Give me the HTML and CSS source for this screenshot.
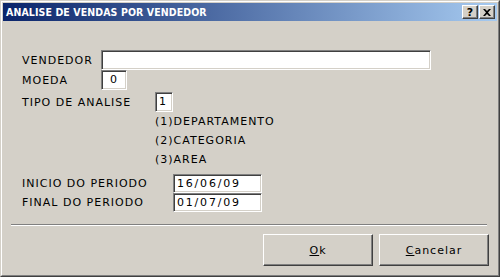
FILE: index.html
```html
<!DOCTYPE html>
<html lang="pt">
<head>
<meta charset="UTF-8">
<title>Analise de Vendas por Vendedor</title>
<link rel="stylesheet" href="styles.css">
</head>
<body>
<div class="window">
  <div class="frame">
    <div class="titlebar">
      <span class="title">ANALISE DE VENDAS POR VENDEDOR</span>
      <div class="caption-buttons">
        <button class="cap-btn help">?</button>
        <button class="cap-btn close">
          <svg width="8" height="7" viewBox="0 0 8 7">
            <path d="M0 0 L2 0 L4 2 L6 0 L8 0 L5 3.5 L8 7 L6 7 L4 5 L2 7 L0 7 L3 3.5 Z" fill="#000"/>
          </svg>
        </button>
      </div>
    </div>

    <div class="content">
      <div class="form">
        <div class="row">
          <span class="label w-short">VENDEDOR</span>
          <div class="field vendedor"></div>
        </div>
        <div class="row">
          <span class="label w-short">MOEDA</span>
          <div class="field moeda">0</div>
        </div>
        <div class="row tipo">
          <span class="label w-mid">TIPO DE ANALISE</span>
          <div class="field tipo-field">1</div>
        </div>
        <div class="options">
          <div>(1)DEPARTAMENTO</div>
          <div>(2)CATEGORIA</div>
          <div>(3)AREA</div>
        </div>
        <div class="dates">
          <div class="row date-row">
            <span class="label w-long">INICIO DO PERIODO</span>
            <div class="field date">16/06/09</div>
          </div>
          <div class="row date-row">
            <span class="label w-long">FINAL DO PERIODO</span>
            <div class="field date">01/07/09</div>
          </div>
        </div>
      </div>

      <div class="separator"></div>

      <div class="actions">
        <button class="btn"><u>O</u>k</button>
        <button class="btn"><u>C</u>ancelar</button>
      </div>
    </div>
  </div>
</div>
</body>
</html>
```

FILE: styles.css
```css
body {
  margin: 0;
  background-color: #d4d0c8;
  font-family: 'DejaVu Sans', Verdana, sans-serif;
  font-size: 11px;
  color: #000;
}

/* outer window border, classic raised look */
.window {
  width: 500px;
  height: 277px;
  box-sizing: border-box;
  border: 1px solid;
  border-color: #d4d0c8 #404040 #404040 #d4d0c8;
  background-color: #d4d0c8;
}

.frame {
  height: 100%;
  box-sizing: border-box;
  border: 1px solid;
  border-color: #fff #808080 #808080 #fff;
  padding: 1px;
}

.titlebar {
  height: 18px;
  display: flex;
  align-items: center;
  justify-content: space-between;
  padding: 0 2px 0 3px;
  background: linear-gradient(to right, #0a246a, #a6caf0);
}

.title {
  color: #fff;
  font-family: 'DejaVu Sans Condensed', 'DejaVu Sans', sans-serif;
  font-weight: bold;
  font-size: 10.5px;
  letter-spacing: 0.1px;
}

.caption-buttons {
  display: flex;
  gap: 1px;
}

.cap-btn {
  width: 16px;
  height: 14px;
  padding: 0;
  display: flex;
  align-items: center;
  justify-content: center;
  background-color: #d4d0c8;
  border: 1px solid;
  border-color: #fff #404040 #404040 #fff;
  box-shadow: inset -1px -1px #808080;
  font-family: 'DejaVu Sans', sans-serif;
  font-weight: bold;
  font-size: 11px;
  line-height: 1;
  color: #000;
}

.content {
  padding-top: 29px;
}

.form {
  padding-left: 19px;
  letter-spacing: 1px;
}

.row {
  display: flex;
  align-items: center;
  height: 20px;
}

.row.tipo {
  margin-top: 2px;
}

.label { flex-shrink: 0; }
.w-short { width: 79px; }
.w-mid { width: 133px; }
.w-long { width: 151px; }

/* sunken text box */
.field {
  box-sizing: border-box;
  height: 20px;
  background-color: #fff;
  border: 1px solid;
  border-color: #808080 #fff #fff #808080;
  box-shadow: inset 1px 1px #404040, inset -1px -1px #d4d0c8;
  line-height: 18px;
  font-size: 11px;
}

.vendedor { width: 330px; }

.moeda {
  width: 26px;
  text-align: center;
}

.tipo-field {
  width: 18px;
  padding-left: 3px;
}

.options {
  margin-left: 133px;
  line-height: 19px;
}

.dates {
  margin-top: 5px;
}

.date-row {
  height: 19px;
}

.date {
  width: 89px;
  height: 19px;
  padding-left: 3px;
  letter-spacing: 1.8px;
  line-height: 17px;
}

.separator {
  margin: 12px 10px 0 8px;
  height: 1px;
  border-top: 1px solid #808080;
  border-bottom: 1px solid #fff;
  height: 0;
}

.actions {
  display: flex;
  justify-content: flex-end;
  gap: 6px;
  margin-top: 8px;
  padding-right: 8px;
}

.btn {
  width: 110px;
  height: 32px;
  background-color: #d4d0c8;
  border: 1px solid;
  border-color: #fff #404040 #404040 #fff;
  box-shadow: inset -1px -1px #808080;
  font-family: 'DejaVu Sans', sans-serif;
  font-size: 11px;
  letter-spacing: 1px;
  color: #000;
  padding: 0;
}
```
